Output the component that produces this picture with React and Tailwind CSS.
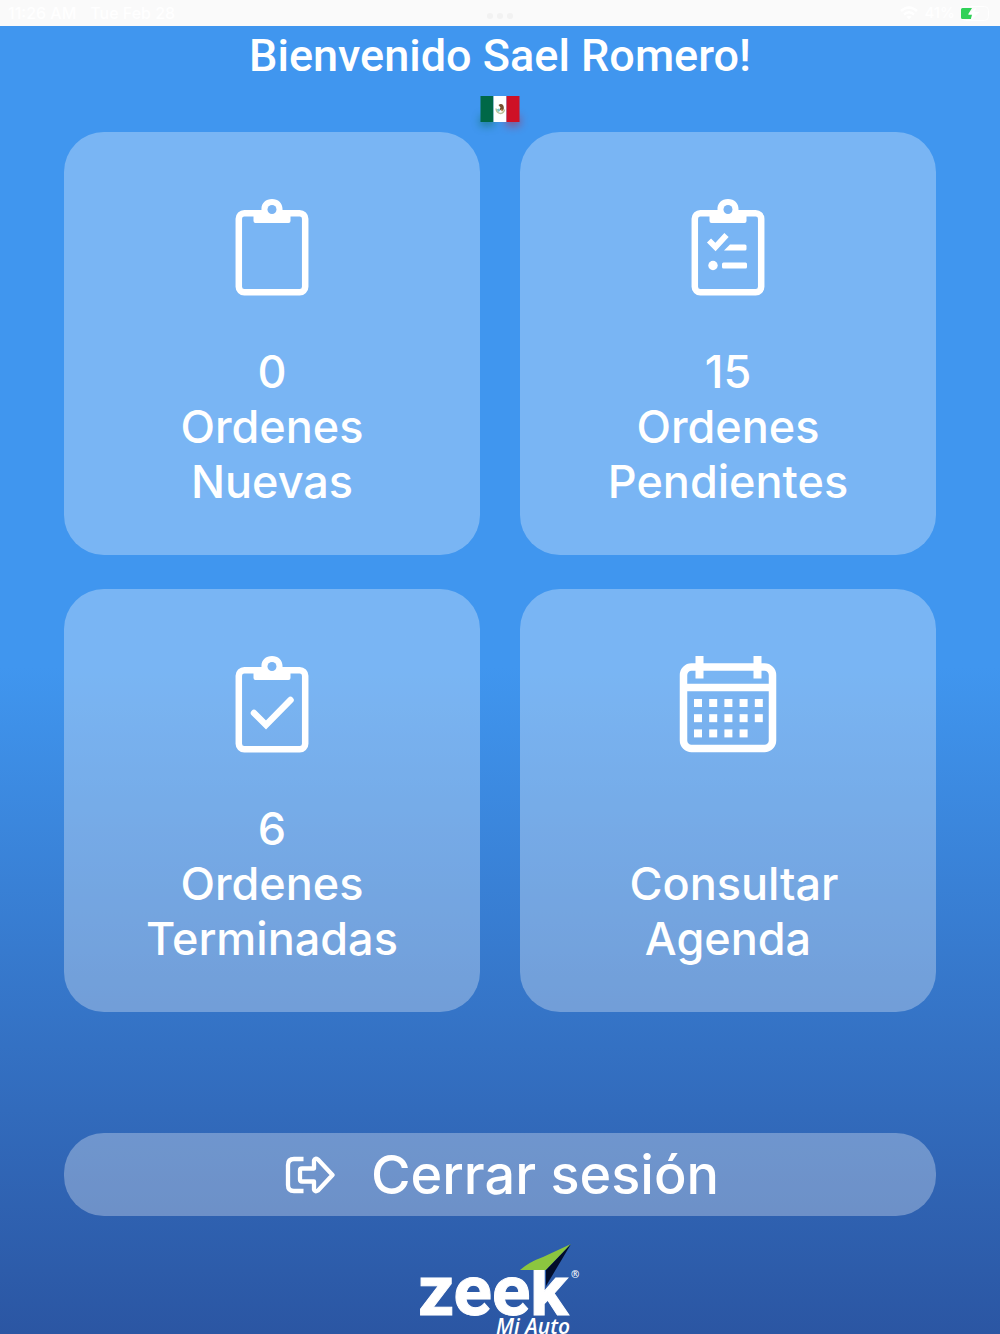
import React from "react";

function Clipboard({ children }) {
    return (
        <svg width="74" height="98" viewBox="0 0 74 98" fill="none" aria-hidden="true">
            <rect x="3.800" y="15.300" width="66.400" height="79" rx="5.500" stroke="#fff" strokeWidth="6.500" />
            <path d="M18.500 12h8c-.6-6.500 4-11 10.500-11s11 4.500 10.500 11h8v11q0 2-2 2h-33q-2 0-2-2z" fill="#fff" />
            <circle cx="37" cy="11.500" r="4.500" fill="#7bb5f4" />
            {children}
        </svg>
    );
}

function PendingMarks() {
    return (
        <>
            <path d="M18 42.500l6.500 6.500 11-12" stroke="#fff" strokeWidth="5.800" />
            <path d="M33 52.500l6-6h15q1.500 0 1.500 1.500v3q0 1.500-1.500 1.500z" fill="#fff" />
            <circle cx="22" cy="67.500" r="4.700" fill="#fff" />
            <rect x="31" y="64.500" width="25" height="6" rx="1.500" fill="#fff" />
        </>
    );
}

function Calendar() {
    const days = [];
    for (let row = 0; row < 3; row++) {
        for (let col = 0; col < (row === 2 ? 4 : 5); col++) {
            days.push([15 + col * 15.2, 44 + row * 15.2]);
        }
    }
    return (
        <svg width="98" height="98" viewBox="0 0 98 98" fill="none" aria-hidden="true">
            <rect x="4.500" y="12" width="89" height="81.500" rx="8" stroke="#fff" strokeWidth="7.500" />
            <path d="M4 32.500h90" stroke="#fff" strokeWidth="7.500" />
            <path d="M20.500 1v22.500M78.500 1v22.500" stroke="#fff" strokeWidth="8" />
            {days.map(([x, y]) => (
                <rect key={`${x}-${y}`} x={x} y={y} width="8" height="8" fill="#fff" />
            ))}
        </svg>
    );
}

function StatusBar() {
    return (
        <div className="flex h-[26px] items-center justify-between bg-[#fafafa] px-2 text-[16px] font-medium text-white">
            <div className="flex flex-1 gap-3.5">
                <span>11:26 AM</span>
                <span>Tue Feb 28</span>
            </div>
            <div className="flex gap-1 pt-1.5">
                <span className="size-[6px] rounded-full bg-[#f2f2f2]" />
                <span className="size-[6px] rounded-full bg-[#f2f2f2]" />
                <span className="size-[6px] rounded-full bg-[#f2f2f2]" />
            </div>
            <div className="flex flex-1 items-center justify-end gap-1.5">
                <svg width="18" height="14" viewBox="0 0 18 14" fill="none" stroke="#fff" strokeWidth="2.400" aria-hidden="true">
                    <path d="M1 5q8-7 16 0M4 8.500q5-4.500 10 0" />
                    <path d="M9 13.500l-2.500-2.700q2.500-2 5 0z" fill="#fff" stroke="none" />
                </svg>
                <span className="text-[15px]">41%</span>
                <svg width="31" height="15" viewBox="0 0 31 15" aria-hidden="true">
                    <rect x=".5" y=".5" width="27" height="14" rx="4" fill="none" stroke="#fff" />
                    <path d="M0 3.500Q0 2 1.500 2H11l-4 6.500h4L10 13H1.500Q0 13 0 11.500z" fill="#30d158" />
                    <path d="M15.500 1L7.500 8.500h4L10 14l8.500-8h-5z" fill="#fff" />
                </svg>
            </div>
        </div>
    );
}

function MexicoFlag() {
    return (
        <div className="relative h-[26px] w-10">
            <div className="absolute inset-x-0 top-5 flex h-2.5 justify-between opacity-50 blur-[4px]">
                <span className="w-3.5 bg-[#006847]" />
                <span className="w-3.5 bg-[#ce1126]" />
            </div>
            <svg className="relative" width="40" height="26" viewBox="0 0 40 26" role="img" aria-label="México">
                <path fill="#006847" d="M.5 0h13v26H.5z" />
                <path fill="#fff" d="M13.500 0h13v26h-13z" />
                <path fill="#ce1126" d="M26.500 0h13v26h-13z" />
                <path d="M16 12.500q.500 4.500 4.500 5 3.500-.500 4-4" fill="none" stroke="#b9c29a" strokeWidth="1.500" />
                <path d="M18.500 9q3-2 4.800.5 1.500 3-.8 5.500l-3-1.500 1-2z" fill="#76502f" />
                <path d="M16.500 13.500l2.500-1 1.500 2-2 1.500z" fill="#7cc5c8" />
                <path d="M21 13l2 1-1 2z" fill="#c9a25c" />
            </svg>
        </div>
    );
}

function OptionCard({ icon, count, lines }) {
    return (
        <button
            type="button"
            className="flex h-[423px] flex-col items-center rounded-[40px] bg-white/30 pt-[66px] text-[45px] leading-[55px] font-medium text-white"
        >
            {icon}
            <span className="mt-12 block h-[55px]">{count}</span>
            {lines.map((line) => (
                <span key={line} className="block whitespace-pre">
                    {line}
                </span>
            ))}
        </button>
    );
}

function Logo() {
    return (
        <svg width="162" height="92" viewBox="0 0 162 92" role="img" aria-label="zeek Mi Auto">
            <text
                x="-1"
                y="73"
                fill="#fff"
                stroke="#fff"
                strokeWidth="1"
                className="font-['Roboto',sans-serif] text-[71px] font-bold"
            >
                zeek
            </text>
            <path d="M101 28Q110 20 124 15L152 2l-25 26z" fill="#8cc63f" />
            <path d="M152 2L127 28v16z" fill="#020d2b" />
            <text x="152" y="36" fill="#fff" className="font-['Open_Sans',sans-serif] text-[10px] font-semibold">
                ®
            </text>
            <text x="77" y="92" fill="#fff" className="font-['Open_Sans',sans-serif] text-[21px] font-semibold italic">
                Mi Auto
            </text>
        </svg>
    );
}

const options = [
    { icon: <Clipboard />, count: "0", lines: ["Ordenes", "Nuevas"] },
    {
        icon: (
            <Clipboard>
                <PendingMarks />
            </Clipboard>
        ),
        count: "15",
        lines: ["Ordenes", "Pendientes"],
    },
    {
        icon: (
            <Clipboard>
                <path d="M19 58l12 12 24.500-25" stroke="#fff" strokeWidth="6.500" strokeLinecap="round" />
            </Clipboard>
        ),
        count: "6",
        lines: ["Ordenes", "Terminadas"],
    },
    { icon: <Calendar />, count: "", lines: [" Consultar", "Agenda"] },
];

export default function App() {
    return (
        <div className="flex min-h-screen flex-col bg-linear-to-b from-[#4096ef] from-50% to-[#2b56a3] font-['Inter',sans-serif]">
            <StatusBar />
            <header className="flex flex-col items-center pt-0.5">
                <h1 className="font-['Roboto',sans-serif] text-[45px] leading-[56px] font-medium text-white">
                    Bienvenido Sael Romero!
                </h1>
                <div className="mt-3">
                    <MexicoFlag />
                </div>
            </header>
            <main className="flex flex-col px-16 pt-2.5">
                <div className="grid grid-cols-2 gap-x-10 gap-y-[34px]">
                    {options.map((option, index) => (
                        <OptionCard key={index} {...option} />
                    ))}
                </div>
                <button
                    type="button"
                    className="mt-[121px] flex h-[83px] items-center justify-center gap-9 rounded-[40px] bg-white/30 pl-1 text-[54px] font-medium text-white"
                >
                    <svg width="50" height="38" viewBox="0 0 50 38" fill="none" stroke="#fff" strokeWidth="4.300" aria-hidden="true">
                        <path d="M18.500 3H9Q3 3 3 9v20q0 6 6 6h9.500" />
                        <path d="M17 12.500h12V4.500q1-3 4-1L47.500 19 33 34.500q-3 2-4-1v-8H17q-2 0-2-2v-9q0-2 2-2z" strokeLinejoin="round" />
                    </svg>
                    Cerrar sesión
                </button>
            </main>
            <footer className="flex justify-center pt-[26px]">
                <Logo />
            </footer>
        </div>
    );
}
